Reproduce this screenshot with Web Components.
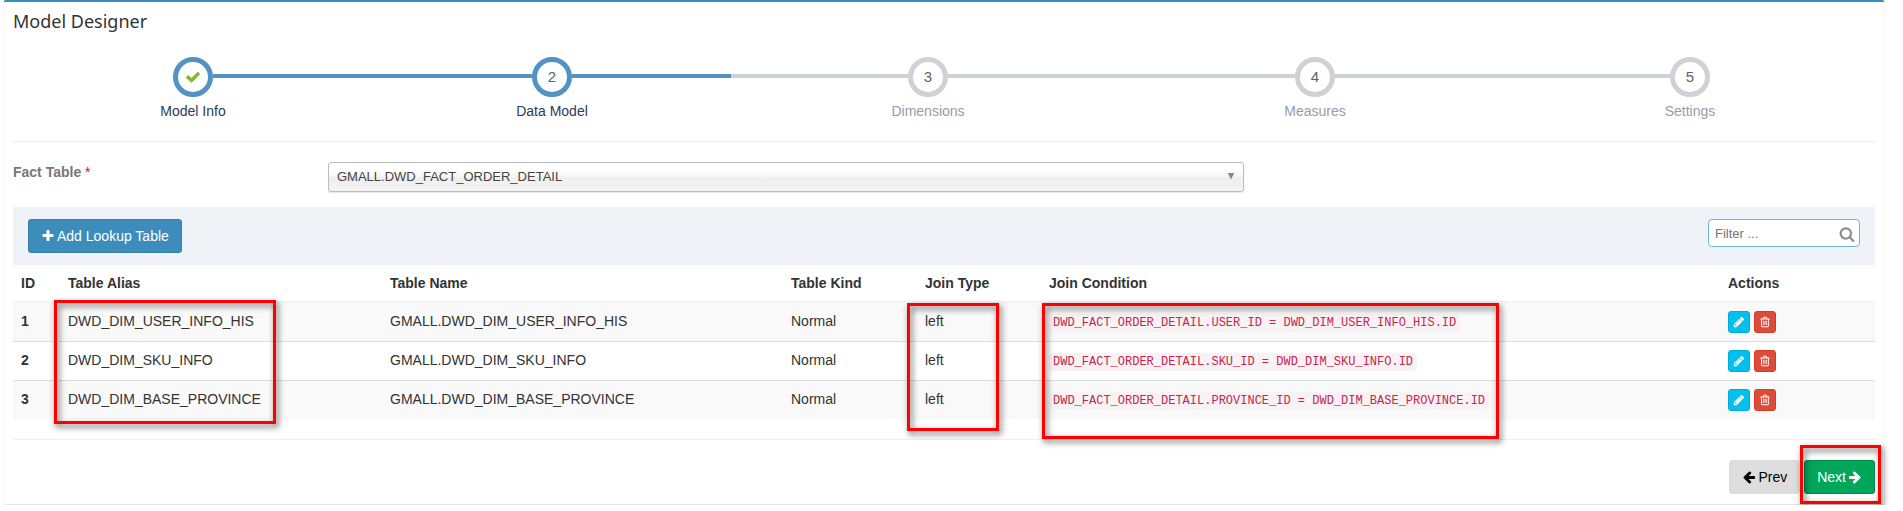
<!DOCTYPE html>
<html lang="en">
<head>
<meta charset="utf-8">
<title>Model Designer</title>
<style>
body { margin: 0; background: #fff; color: #333; font: 14px/20px "Liberation Sans", Arial, sans-serif; }
</style>
</head>
<body>
<model-designer></model-designer>
<script>
const ICONS = {
  plus: 'M1600 736v192q0 40-28 68t-68 28h-416v416q0 40-28 68t-68 28h-192q-40 0-68-28t-28-68v-416h-416q-40 0-68-28t-28-68v-192q0-40 28-68t68-28h416v-416q0-40 28-68t68-28h192q40 0 68 28t28 68v416h416q40 0 68 28t28 68z',
  pencil: 'M491 1536l91-91-235-235-91 91v107h128v128h107zm523-928q0-22-22-22-10 0-17 7l-542 542q-7 7-7 17 0 22 22 22 10 0 17-7l542-542q7-7 7-17zm-54-192l416 416-832 832h-416v-416zm683 96q0 53-37 90l-166 166-416-416 166-165q36-38 90-38 53 0 91 38l235 234q37 39 37 91z',
  trash: 'M704 736v576q0 14-9 23t-23 9h-64q-14 0-23-9t-9-23v-576q0-14 9-23t23-9h64q14 0 23 9t9 23zm256 0v576q0 14-9 23t-23 9h-64q-14 0-23-9t-9-23v-576q0-14 9-23t23-9h64q14 0 23 9t9 23zm256 0v576q0 14-9 23t-23 9h-64q-14 0-23-9t-9-23v-576q0-14 9-23t23-9h64q14 0 23 9t9 23zm128 724v-948h-896v948q0 22 7 40.5t14.5 27 10.5 8.5h832q3 0 10.5-8.5t14.5-27 7-40.5zm-672-1076h448l-48-117q-7-9-17-11h-317q-10 2-17 11zm928 32v64q0 14-9 23t-23 9h-96v948q0 83-47 143.5t-113 60.5h-832q-66 0-113-58.5t-47-141.5v-952h-96q-14 0-23-9t-9-23v-64q0-14 9-23t23-9h309l70-167q15-37 54-63t79-26h320q40 0 79 26t54 63l70 167h309q14 0 23 9t9 23z',
  search: 'M1216 832q0-185-131.5-316.5t-316.5-131.5-316.5 131.5-131.5 316.5 131.5 316.5 316.5 131.5 316.5-131.5 131.5-316.5zm512 832q0 52-38 90t-90 38q-54 0-90-38l-343-342q-179 124-399 124-143 0-273.5-55.5t-225-150-150-225-55.5-273.5 55.5-273.5 150-225 225-150 273.5-55.5 273.5 55.5 225 150 150 225 55.5 273.5q0 220-124 399l343 343q37 37 37 90z',
  check: 'M1671 566q0 40-28 68l-724 724-136 136q-28 28-68 28t-68-28l-136-136-362-362q-28-28-28-68t28-68l136-136q28-28 68-28t68 28l294 295 656-657q28-28 68-28t68 28l136 136q28 28 28 68z',
  left: 'M1664 896v128q0 53-32.5 90.5t-84.5 37.5h-704l293 294q38 36 38 90t-38 90l-75 76q-37 37-90 37-52 0-91-37l-651-652q-37-37-37-90 0-52 37-91l651-650q38-38 91-38 52 0 90 38l75 74q38 38 38 91t-38 91l-293 293h704q52 0 84.5 37.5t32.5 90.5z',
  caret: 'M300 350h1192l-596 1192z'
};

function define(name, html, setup) {
  const template = document.createElement('template');
  template.innerHTML = html;
  customElements.define(name, class extends HTMLElement {
    constructor() {
      super();
      this.attachShadow({ mode: 'open' }).append(template.content.cloneNode(true));
    }
    connectedCallback() { if (setup) setup(this, this.shadowRoot); }
  });
}

define('ui-icon', `
<style>
:host { display: inline-block; width: 14px; height: 14px; flex: none; }
svg { display: block; width: 100%; height: 100%; fill: currentColor; }
:host([flip]) svg { transform: scaleX(-1); }
</style>
<svg viewBox="0 0 1792 1792" aria-hidden="true"><path/></svg>`,
(el, root) => root.querySelector('path').setAttribute('d', ICONS[el.getAttribute('name')]));

define('ui-button', `
<style>
:host { display: inline-block; }
button { display: flex; align-items: center; justify-content: center; gap: 2px; height: 34px; padding: 0 12px;
  border: 1px solid #367fa9; border-radius: 3px; background: #3c8dbc; color: #fff; font: inherit; white-space: nowrap; cursor: pointer; }
:host([kind=default]) button { background: #ddd; border-color: #ddd; color: #000; }
:host([kind=success]) button { background: #00a65a; border-color: #008d4c; }
:host([kind=info]) button { background: #00c0ef; border-color: #00acd6; }
:host([kind=danger]) button { background: #dd4b39; border-color: #d73925; }
:host([small]) button { width: 22px; height: 22px; padding: 0; }
:host([small]) { font-size: 12px; }
</style>
<button type="button"><slot></slot></button>`,
(el, root) => { if (el.title) root.querySelector('button').setAttribute('aria-label', el.title); });

/* Red frame laid over its positioned ancestor; its extent comes from --inset. */
define('highlight-frame', `
<style>
:host { position: absolute; inset: var(--inset); border: 3px solid #f00; filter: drop-shadow(2px 3px 3px rgba(0,0,0,.65)); pointer-events: none; z-index: 1; }
</style>`);

define('wizard-step', `
<style>
:host { display: grid; grid-template-columns: 1fr 40px 1fr; grid-template-rows: 40px auto; row-gap: 4px; align-items: center;
  --left: #ced1d6; --right: #ced1d6; --ring: #ced1d6; color: #949ea7; }
:host([state=done]), :host([state=active]) { --left: #5293c4; --right: #5293c4; --ring: #5293c4; color: #2b3d53; }
:host(:first-child) { --left: transparent; }
:host(:last-child) { --right: transparent; }
.line { height: 4px; margin-bottom: 2px; background: var(--left); }
.line.after { background: var(--right); }
.ring { box-sizing: border-box; width: 40px; height: 40px; border: 5px solid var(--ring); border-radius: 50%;
  display: flex; align-items: center; justify-content: center; font-size: 15px; color: #546474; }
.ring ui-icon { width: 16px; height: 16px; color: #87ba21; }
.label { grid-column: 1 / -1; text-align: center; }
</style>
<span class="line"></span><span class="ring"></span><span class="line after"></span>
<span class="label"><slot></slot></span>`,
(el, root) => {
  const ring = root.querySelector('.ring');
  if (el.getAttribute('state') === 'done') ring.innerHTML = '<ui-icon name="check"></ui-icon>';
  else ring.textContent = el.getAttribute('number');
});

define('wizard-steps', `
<style>
:host { display: grid; grid-template-columns: 360fr 358fr 394fr 380fr 370fr; }
</style>
<slot></slot>`);

define('fact-table-field', `
<style>
:host { display: grid; grid-template-columns: 315fr 916fr 631fr; }
label { font-weight: 700; color: #777; }
label span { color: #f00; font-weight: 400; }
.box { display: grid; align-items: center; }
select, ui-icon { grid-area: 1 / 1; }
select { appearance: none; box-sizing: border-box; width: 100%; height: 30px; padding: 0 24px 0 8px; border: 1px solid #bbb; border-radius: 3px;
  background: linear-gradient(#fff 20%, #f6f6f6 50%, #eee 52%, #f4f4f4); box-shadow: 0 1px 1px rgba(0,0,0,.1); color: #444; font: inherit; font-size: 13px; }
ui-icon { justify-self: end; width: 10px; height: 10px; margin: 0 8px 2px 0; color: #888; pointer-events: none; }
</style>
<label for="fact">Fact Table <span>*</span></label>
<div class="box"><select id="fact"><option>GMALL.DWD_FACT_ORDER_DETAIL</option></select><ui-icon name="caret"></ui-icon></div>`);

define('filter-box', `
<style>
:host { display: grid; width: 152px; align-items: center; }
input, ui-icon { grid-area: 1 / 1; }
input { box-sizing: border-box; width: 100%; height: 28px; padding: 0 28px 0 6px; border: 1px solid #6fb3e0; border-radius: 4px; background: #fff; color: #393939; font: inherit; font-size: 13px; }
input::placeholder { color: #757575; opacity: 1; }
ui-icon { justify-self: end; width: 16px; height: 16px; margin: 2px 5px 0 0; color: #909090; pointer-events: none; }
</style>
<input type="text" placeholder="Filter ..." aria-label="Filter"><ui-icon name="search"></ui-icon>`);

define('lookup-table', `
<style>
:host { display: block; }
table { width: 100%; table-layout: fixed; border-collapse: separate; border-spacing: 0; }
th, td { box-sizing: border-box; padding: 8px; text-align: left; vertical-align: top; white-space: nowrap; position: relative; }
thead th { height: 38px; border-bottom: 2px solid #f4f4f4; }
tbody td, tbody th { height: 38px; }
tbody tr + tr > * { height: 39px; border-top: 1px solid #ddd; }
tbody tr:nth-child(odd) { background: #f9f9f9; }
code { padding: 2px 4px; border-radius: 4px; background: #f9f2f4; color: #c7254e; font: 12px/20px "Liberation Mono", Consolas, monospace; }
.actions { display: flex; gap: 4px; }
.alias { --inset: -3px 106px -83px -6px; }
.join { --inset: 0 42px -90px -10px; }
.condition { --inset: 0 221px -98px 1px; }
</style>
<table>
<colgroup><col style="width:47px"><col style="width:322px"><col style="width:401px"><col style="width:134px"><col style="width:124px"><col style="width:679px"><col style="width:155px"></colgroup>
<thead><tr><th>ID</th><th>Table Alias</th><th>Table Name</th><th>Table Kind</th><th>Join Type</th><th>Join Condition</th><th>Actions</th></tr></thead>
<tbody></tbody>
</table>`,
(el, root) => {
  const rows = [
    ['DWD_DIM_USER_INFO_HIS', 'USER_ID'],
    ['DWD_DIM_SKU_INFO', 'SKU_ID'],
    ['DWD_DIM_BASE_PROVINCE', 'PROVINCE_ID']
  ];
  root.querySelector('tbody').innerHTML = rows.map(([name, key], i) => {
    const frame = i ? '' : '<highlight-frame></highlight-frame>';
    return `<tr><th scope="row">${i + 1}</th><td class="alias">${name}${frame}</td><td>GMALL.${name}</td><td>Normal</td>
      <td class="join">left${frame}</td><td class="condition"><code>DWD_FACT_ORDER_DETAIL.${key} = ${name}.ID</code>${frame}</td>
      <td><div class="actions"><ui-button kind="info" small title="Edit"><ui-icon name="pencil" style="width:12px;height:12px"></ui-icon></ui-button><ui-button kind="danger" small title="Delete"><ui-icon name="trash" style="width:12px;height:12px"></ui-icon></ui-button></div></td></tr>`;
  }).join('');
});

define('model-designer', `
<style>
:host { display: block; padding: 0 18px 0 3px; }
main { border: solid #f7f7f7; border-width: 0 1px; border-top: 2px solid #3c8dbc; border-bottom: 1px solid #e4e4e4; border-radius: 3px; padding: 6px 9px 10px; }
h1 { margin: 0 0 23px; font: 400 18px/26px "Noto Sans", sans-serif; color: #333; }
hr { height: 0; margin: 0; border: 0; border-top: 1px solid #eee; }
wizard-steps { margin-bottom: 20px; }
fact-table-field { margin: 20px 0 15px; }
.toolbar { display: flex; justify-content: space-between; align-items: flex-start; padding: 12px 15px; background: #eff3f8; }
lookup-table { margin-bottom: 20px; }
footer { display: flex; justify-content: flex-end; gap: 4px; margin-top: 20px; }
.next { position: relative; --inset: -15px -6px -10px -4px; }
</style>
<main>
<h1>Model Designer</h1>
<wizard-steps>
<wizard-step number="1" state="done">Model Info</wizard-step>
<wizard-step number="2" state="active">Data Model</wizard-step>
<wizard-step number="3">Dimensions</wizard-step>
<wizard-step number="4">Measures</wizard-step>
<wizard-step number="5">Settings</wizard-step>
</wizard-steps>
<hr>
<fact-table-field></fact-table-field>
<div class="toolbar"><ui-button><ui-icon name="plus"></ui-icon>Add Lookup Table</ui-button><filter-box></filter-box></div>
<lookup-table></lookup-table>
<hr>
<footer><ui-button kind="default"><ui-icon name="left"></ui-icon>Prev</ui-button><div class="next"><ui-button kind="success">Next<ui-icon name="left" flip></ui-icon></ui-button><highlight-frame></highlight-frame></div></footer>
</main>`);
</script>
</body>
</html>
